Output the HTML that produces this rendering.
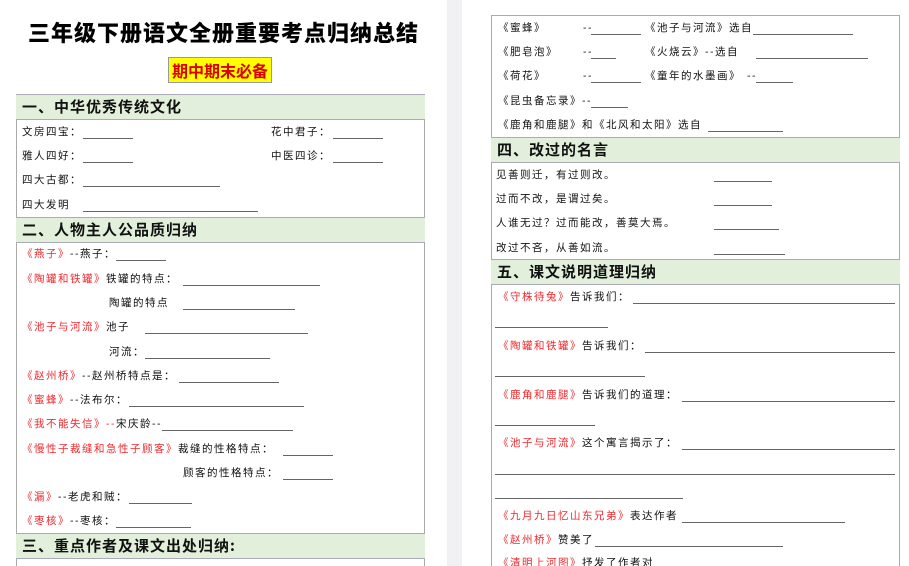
<!DOCTYPE html>
<html><head><meta charset="utf-8"><style>
*{margin:0;padding:0;box-sizing:border-box}
html,body{width:909px;height:566px;overflow:hidden}
body{background:#fff;position:relative;font-family:"Liberation Sans","Noto Sans CJK SC",sans-serif;color:#111}
.t{position:absolute;font-size:10.5px;line-height:14px;letter-spacing:1.5px;white-space:nowrap}
.r{color:#f0282d}
.l{position:absolute;height:0;border-top:1px solid #666}
.h{position:absolute;background:#e2efda;border-top:1px solid #aab;border-bottom:1px solid #aab;font-size:15px;font-weight:bold;line-height:24px;padding-left:6px;letter-spacing:1px;font-family:"Noto Sans CJK SC",sans-serif}
.box{position:absolute;border:1px solid #aaa;border-bottom:none}
</style></head><body>
<div style="position:absolute;left:447px;top:0;width:15px;height:566px;background:#f1f1f4"></div>
<div style="position:absolute;left:0;top:12px;width:447px;text-align:center;font-size:22px;font-weight:900;letter-spacing:1px;font-family:'Noto Sans CJK SC',sans-serif;line-height:40px;color:#000">三年级下册语文全册重要考点归纳总结</div>
<div style="position:absolute;left:168px;top:57px;width:104px;height:26px;background:#ffff00;border:1px solid #999;color:#d00;font-size:16px;font-weight:bold;text-align:center;line-height:24px;font-family:'Noto Sans CJK SC',sans-serif">期中期末必备</div>
<div class="box" style="left:16px;top:94px;width:409px;height:472px"></div>
<div class="h" style="left:16px;top:94px;width:409px;height:26px">一、中华优秀传统文化</div>
<div class="h" style="left:16px;top:217px;width:409px;height:26px">二、人物主人公品质归纳</div>
<div class="h" style="left:16px;top:533px;width:409px;height:26px">三、重点作者及课文出处归纳:</div>

<div class="t" style="left:22px;top:125px">文房四宝：</div><div class="l" style="left:83px;top:138px;width:50px"></div>
<div class="t" style="left:271px;top:125px">花中君子：</div><div class="l" style="left:333px;top:138px;width:50px"></div>
<div class="t" style="left:22px;top:149px">雅人四好：</div><div class="l" style="left:83px;top:162px;width:50px"></div>
<div class="t" style="left:271px;top:149px">中医四诊：</div><div class="l" style="left:333px;top:162px;width:50px"></div>
<div class="t" style="left:22px;top:173px">四大古都：</div><div class="l" style="left:83px;top:186px;width:137px"></div>
<div class="t" style="left:22px;top:198px">四大发明</div><div class="l" style="left:83px;top:211px;width:175px"></div>

<div class="t" style="left:22px;top:247px"><span class="r">《燕子》</span>--燕子：</div><div class="l" style="left:116px;top:260px;width:50px"></div>
<div class="t" style="left:22px;top:272px"><span class="r">《陶罐和铁罐》</span>铁罐的特点：</div><div class="l" style="left:183px;top:285px;width:137px"></div>
<div class="t" style="left:109px;top:296px">陶罐的特点</div><div class="l" style="left:183px;top:309px;width:112px"></div>
<div class="t" style="left:22px;top:320px"><span class="r">《池子与河流》</span>池子</div><div class="l" style="left:145px;top:333px;width:163px"></div>
<div class="t" style="left:109px;top:345px">河流：</div><div class="l" style="left:145px;top:358px;width:125px"></div>
<div class="t" style="left:22px;top:369px"><span class="r">《赵州桥》</span>--赵州桥特点是：</div><div class="l" style="left:179px;top:382px;width:100px"></div>
<div class="t" style="left:22px;top:393px"><span class="r">《蜜蜂》</span>--法布尔：</div><div class="l" style="left:129px;top:406px;width:175px"></div>
<div class="t" style="left:22px;top:417px"><span class="r">《我不能失信》--</span>宋庆龄--</div><div class="l" style="left:162px;top:430px;width:131px"></div>
<div class="t" style="left:22px;top:442px"><span class="r">《慢性子裁缝和急性子顾客》</span>裁缝的性格特点：</div><div class="l" style="left:283px;top:455px;width:50px"></div>
<div class="t" style="left:183px;top:466px">顾客的性格特点：</div><div class="l" style="left:283px;top:479px;width:50px"></div>
<div class="t" style="left:22px;top:490px"><span class="r">《漏》</span>--老虎和贼：</div><div class="l" style="left:129px;top:503px;width:63px"></div>
<div class="t" style="left:22px;top:514px"><span class="r">《枣核》</span>--枣核：</div><div class="l" style="left:116px;top:527px;width:75px"></div>

<div class="box" style="left:491px;top:15px;width:409px;height:551px"></div>
<div class="h" style="left:491px;top:137px;width:409px;height:26px">四、改过的名言</div>
<div class="h" style="left:491px;top:259px;width:409px;height:26px">五、课文说明道理归纳</div>

<div class="t" style="left:498px;top:21px">《蜜蜂》</div><div class="t" style="left:583px;top:21px">--</div><div class="l" style="left:591px;top:34px;width:50px"></div>
<div class="t" style="left:645px;top:21px">《池子与河流》选自</div><div class="l" style="left:753px;top:34px;width:100px"></div>
<div class="t" style="left:498px;top:45px">《肥皂泡》</div><div class="t" style="left:583px;top:45px">--</div><div class="l" style="left:591px;top:58px;width:25px"></div>
<div class="t" style="left:645px;top:45px">《火烧云》--选自</div><div class="l" style="left:756px;top:58px;width:112px"></div>
<div class="t" style="left:498px;top:69px">《荷花》</div><div class="t" style="left:583px;top:69px">--</div><div class="l" style="left:591px;top:82px;width:50px"></div>
<div class="t" style="left:645px;top:69px">《童年的水墨画》</div><div class="t" style="left:747px;top:69px">--</div><div class="l" style="left:756px;top:82px;width:37px"></div>
<div class="t" style="left:498px;top:94px">《昆虫备忘录》--</div><div class="l" style="left:591px;top:107px;width:37px"></div>
<div class="t" style="left:498px;top:118px">《鹿角和鹿腿》和《北风和太阳》选自</div><div class="l" style="left:708px;top:131px;width:75px"></div>

<div class="t" style="left:496px;top:168px">见善则迁，有过则改。</div><div class="l" style="left:714px;top:181px;width:58px"></div>
<div class="t" style="left:496px;top:192px">过而不改，是谓过矣。</div><div class="l" style="left:714px;top:205px;width:58px"></div>
<div class="t" style="left:496px;top:216px">人谁无过？过而能改，善莫大焉。</div><div class="l" style="left:714px;top:229px;width:65px"></div>
<div class="t" style="left:496px;top:241px">改过不吝，从善如流。</div><div class="l" style="left:714px;top:254px;width:71px"></div>

<div class="t" style="left:498px;top:290px"><span class="r">《守株待兔》</span>告诉我们：</div><div class="l" style="left:633px;top:303px;width:262px"></div>
<div class="l" style="left:495px;top:327px;width:113px"></div>
<div class="t" style="left:498px;top:339px"><span class="r">《陶罐和铁罐》</span>告诉我们：</div><div class="l" style="left:645px;top:352px;width:250px"></div>
<div class="l" style="left:495px;top:376px;width:150px"></div>
<div class="t" style="left:498px;top:388px"><span class="r">《鹿角和鹿腿》</span>告诉我们的道理：</div><div class="l" style="left:682px;top:401px;width:213px"></div>
<div class="l" style="left:495px;top:425px;width:100px"></div>
<div class="t" style="left:498px;top:436px"><span class="r">《池子与河流》</span>这个寓言揭示了：</div><div class="l" style="left:682px;top:449px;width:213px"></div>
<div class="l" style="left:495px;top:474px;width:400px"></div>
<div class="l" style="left:495px;top:498px;width:188px"></div>
<div class="t" style="left:498px;top:509px"><span class="r">《九月九日忆山东兄弟》</span>表达作者</div><div class="l" style="left:682px;top:522px;width:163px"></div>
<div class="t" style="left:498px;top:533px"><span class="r">《赵州桥》</span>赞美了</div><div class="l" style="left:595px;top:546px;width:188px"></div>
<div class="t" style="left:498px;top:556px"><span class="r">《清明上河图》</span>抒发了作者对</div>
</body></html>
